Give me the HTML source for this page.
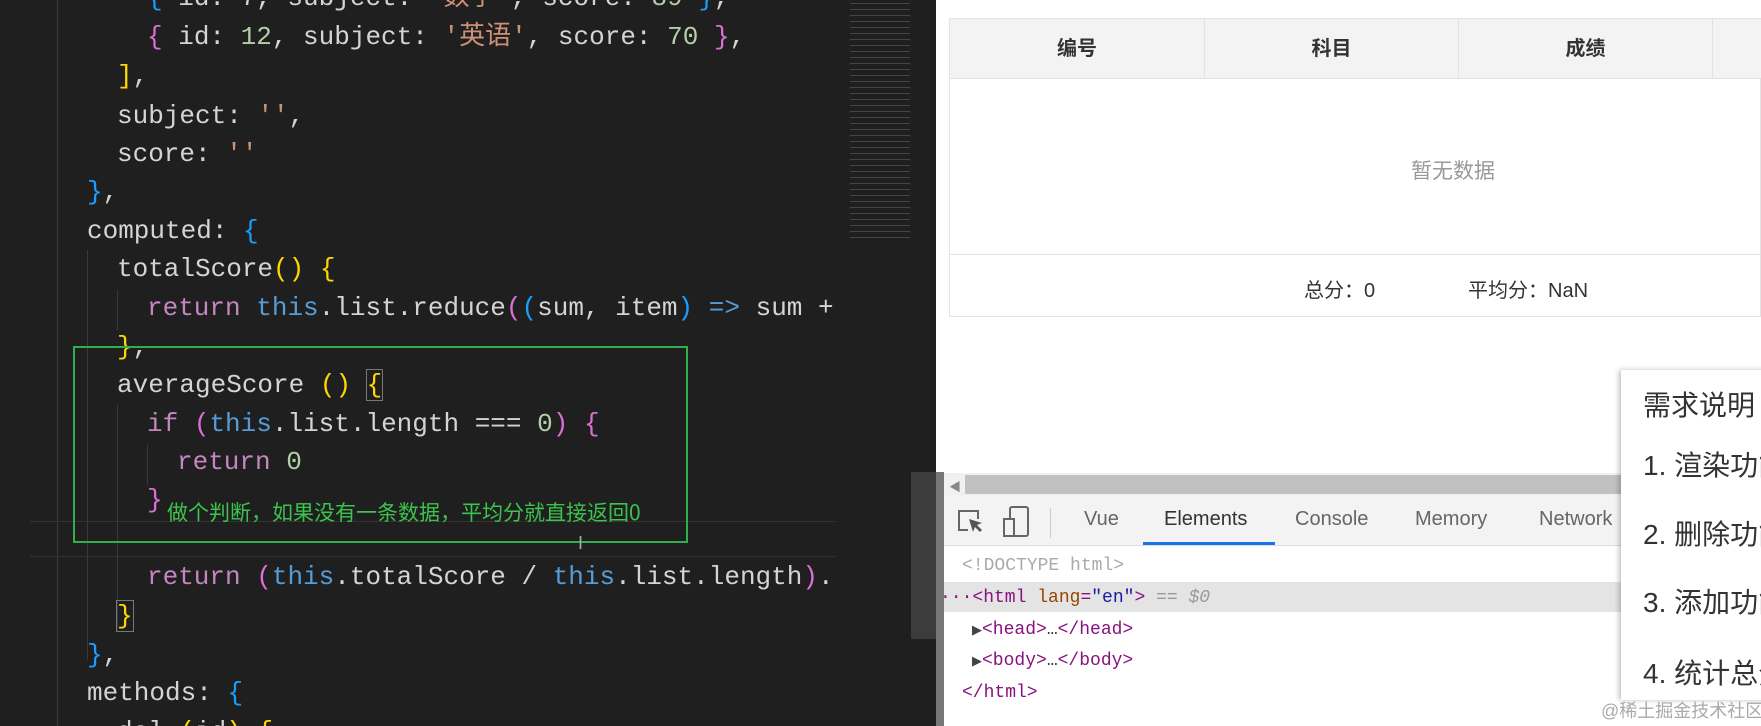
<!DOCTYPE html>
<html><head><meta charset="utf-8"><style>
*{margin:0;padding:0;box-sizing:border-box}
body{width:1761px;height:726px;overflow:hidden;background:#fff;position:relative;font-family:"Liberation Sans","Noto Sans CJK SC",sans-serif}
#code{position:absolute;left:0;top:0;width:936px;height:726px;background:#1f1f1f;overflow:hidden}
#clip{position:absolute;left:0;top:0;width:836px;height:726px;overflow:hidden}
.l{position:absolute;white-space:pre;font-family:"Liberation Mono","Noto Sans CJK SC",monospace;font-size:26px;line-height:38px;color:#d4d4d4}
.k{color:#c586c0}.t{color:#569cd6}.s{color:#ce9178}.n{color:#b5cea8}.f{color:#dcdcaa}.v{color:#9cdcfe}
.b1{color:#ffd700}.b2{color:#da70d6}.b3{color:#179fff}
.g{position:absolute;width:1px;background:#3a3a3a}
#right{position:absolute;left:936px;top:0;right:0;bottom:0;background:#fff}
table{position:absolute;left:13px;top:18px;border-collapse:collapse;width:900px}
.th{position:absolute;top:18px;height:61px;background:#f3f3f3;border:1px solid #e3e3e3;text-align:center;line-height:60px;font-weight:bold;font-size:20px;color:#333}
.tab{position:absolute;top:508px;font-size:20px;color:#666}
.dt{position:absolute;font-family:"Liberation Mono",monospace;font-size:18px;line-height:24px;color:#881280;white-space:pre}
.pop{position:absolute;font-size:28px;color:#333;white-space:nowrap}
</style></head><body>
<div id="code">
 <div class="g" style="left:57px;top:0;height:726px"></div>
 <div class="g" style="left:87px;top:250px;height:410px"></div>
 <div class="g" style="left:117px;top:290px;height:40px"></div>
 <div class="g" style="left:117px;top:405px;height:225px"></div>
 <div class="g" style="left:147px;top:445px;height:40px"></div>
 <div style="position:absolute;left:30px;top:521px;width:805px;height:1px;background:#333"></div>
 <div style="position:absolute;left:30px;top:556px;width:805px;height:1px;background:#333"></div>
 <div id="clip">
 <div class="l" style="left:147px;top:-21px"><span class="b3">{</span> id: 7, subject: <span class="s">'数学'</span>, score: <span class="n">89</span> <span class="b3">}</span>,</div>
 <div class="l" style="left:147px;top:18px"><span class="b2">{</span> id: <span class="n">12</span>, subject: <span class="s">'英语'</span>, score: <span class="n">70</span> <span class="b2">}</span>,</div>
 <div class="l" style="left:117px;top:57px"><span class="b1">]</span>,</div>
 <div class="l" style="left:117px;top:97px">subject: <span class="s">''</span>,</div>
 <div class="l" style="left:117px;top:135px">score: <span class="s">''</span></div>
 <div class="l" style="left:87px;top:173px"><span class="b3">}</span>,</div>
 <div class="l" style="left:87px;top:212px">computed: <span class="b3">{</span></div>
 <div class="l" style="left:117px;top:250px">totalScore<span class="b1">()</span> <span class="b1">{</span></div>
 <div class="l" style="left:147px;top:289px"><span class="k">return</span> <span class="t">this</span>.list.reduce<span class="b2">(</span><span class="b3">(</span>sum, item<span class="b3">)</span> <span class="t">=&gt;</span> sum +</div>
 <div class="l" style="left:117px;top:328px"><span class="b1">}</span>,</div>
 <div class="l" style="left:117px;top:366px">averageScore <span class="b1">()</span> <span class="b1" style="outline:1px solid #777">{</span></div>
 <div class="l" style="left:147px;top:405px"><span class="k">if</span> <span class="b2">(</span><span class="t">this</span>.list.length === <span class="n">0</span><span class="b2">)</span> <span class="b2">{</span></div>
 <div class="l" style="left:177px;top:443px"><span class="k">return</span> <span class="n">0</span></div>
 <div class="l" style="left:147px;top:481px"><span class="b2">}</span></div>
 <div class="l" style="left:147px;top:558px"><span class="k">return</span> <span class="b2">(</span><span class="t">this</span>.totalScore / <span class="t">this</span>.list.length<span class="b2">)</span>.t</div>
 <div class="l" style="left:117px;top:597px"><span class="b1" style="outline:1px solid #777">}</span></div>
 <div class="l" style="left:87px;top:636px"><span class="b3">}</span>,</div>
 <div class="l" style="left:87px;top:674px">methods: <span class="b3">{</span></div>
 <div class="l" style="left:117px;top:713px">del <span class="b1">(</span>id<span class="b1">)</span> <span class="b1">{</span></div>
 </div>
 <div style="position:absolute;left:850px;top:0;width:60px;height:240px;opacity:.35;background:repeating-linear-gradient(#1f1f1f 0 3px,#8a8a8a 3px 4px,#1f1f1f 4px 6px)"></div>
 <div style="position:absolute;left:911px;top:472px;width:25px;height:167px;background:#3c3c3c"></div>
 <div style="position:absolute;left:73px;top:346px;width:615px;height:197px;border:2px solid #2fb04a"></div>
 <div style="position:absolute;left:167px;top:498px;font-size:21px;color:#3cc24e;font-family:'Noto Sans CJK SC',sans-serif;white-space:nowrap;line-height:28px">做个判断，如果没有一条数据，平均分就直接返回0</div>
 <div style="position:absolute;left:578px;top:533px;color:#aaa;font-size:18px">I</div>
</div>
<div id="right">
 <div style="position:absolute;left:13px;top:18px;right:0;height:299px;border:1px solid #e3e3e3"></div>
 <div class="th" style="left:13px;width:256px">编号</div>
 <div class="th" style="left:268px;width:255px">科目</div>
 <div class="th" style="left:522px;width:255px">成绩</div>
 <div class="th" style="left:776px;width:60px"></div>
 <div style="position:absolute;left:13px;top:254px;right:0;height:1px;background:#e3e3e3"></div>
 <div style="position:absolute;left:475px;top:155px;font-size:21px;color:#999">暂无数据</div>
 <div style="position:absolute;left:368px;top:274px;font-size:20px;color:#333">总分：0</div>
 <div style="position:absolute;left:532px;top:274px;font-size:20px;color:#333">平均分：NaN</div>
 <div style="position:absolute;left:0;top:472px;width:8px;height:254px;background:#777"></div>
 <div style="position:absolute;left:8px;top:473px;right:0;height:22px;background:#f1f1f1"></div>
 <div style="position:absolute;left:29px;top:475px;right:0;height:19px;background:#c1c1c1"></div>
 <div style="position:absolute;left:13px;top:478px;color:#888;font-size:12px">◀</div>
 <div style="position:absolute;left:8px;top:495px;right:0;height:51px;background:#f3f3f3;border-bottom:1px solid #ddd"></div>
 <svg style="position:absolute;left:20px;top:508px" width="34" height="30" viewBox="0 0 34 30"><path d="M12 22H3V3h19v8" fill="none" stroke="#666" stroke-width="2"/><path d="M13 11l4 13 2-5 5 5 2-2-5-5 5-2z" fill="#555"/></svg>
 <svg style="position:absolute;left:66px;top:505px" width="30" height="34" viewBox="0 0 30 34"><rect x="8" y="2" width="18" height="29" rx="2" fill="none" stroke="#666" stroke-width="2"/><rect x="2" y="14" width="10" height="17" fill="#f3f3f3" stroke="#666" stroke-width="2"/></svg>
 <div style="position:absolute;left:114px;top:508px;width:1px;height:30px;background:#ccc"></div>
 <div class="tab" style="left:148px">Vue</div>
 <div class="tab" style="left:228px;color:#333">Elements</div>
 <div class="tab" style="left:359px">Console</div>
 <div class="tab" style="left:479px">Memory</div>
 <div class="tab" style="left:603px">Network</div>
 <div style="position:absolute;left:207px;top:542px;width:132px;height:3px;background:#1a73e8"></div>
 <div style="position:absolute;left:8px;top:547px;right:0;height:179px;background:#fff"></div>
 <div class="dt" style="left:26px;top:554px;color:#aaa">&lt;!DOCTYPE html&gt;</div>
 <div style="position:absolute;left:8px;top:582px;right:0;height:30px;background:#e4e4e4"></div>
 <div class="dt" style="left:4px;top:586px">···&lt;html <span style="color:#994500">lang</span>=<span style="color:#1a1aa6">"en"</span>&gt; <span style="color:#999;font-style:italic">== $0</span></div>
 <div class="dt" style="left:36px;top:618px"><span style="color:#444;font-size:13px">▶</span>&lt;head&gt;<span style="color:#333">…</span>&lt;/head&gt;</div>
 <div class="dt" style="left:36px;top:649px"><span style="color:#444;font-size:13px">▶</span>&lt;body&gt;<span style="color:#333">…</span>&lt;/body&gt;</div>
 <div class="dt" style="left:26px;top:681px">&lt;/html&gt;</div>
 <div style="position:absolute;left:685px;top:370px;width:200px;height:330px;background:#fff;box-shadow:-2px 0 5px rgba(0,0,0,.25);overflow:hidden">
  <div class="pop" style="left:22px;top:14px">需求说明</div>
  <div class="pop" style="left:22px;top:74px">1. 渲染功能</div>
  <div class="pop" style="left:22px;top:143px">2. 删除功能</div>
  <div class="pop" style="left:22px;top:211px">3. 添加功能</div>
  <div class="pop" style="left:22px;top:282px">4. 统计总分</div>
 </div>
 <div style="position:absolute;left:665px;top:697px;font-size:18px;color:#aaa;white-space:nowrap">@稀土掘金技术社区</div>
</div>
</body></html>
